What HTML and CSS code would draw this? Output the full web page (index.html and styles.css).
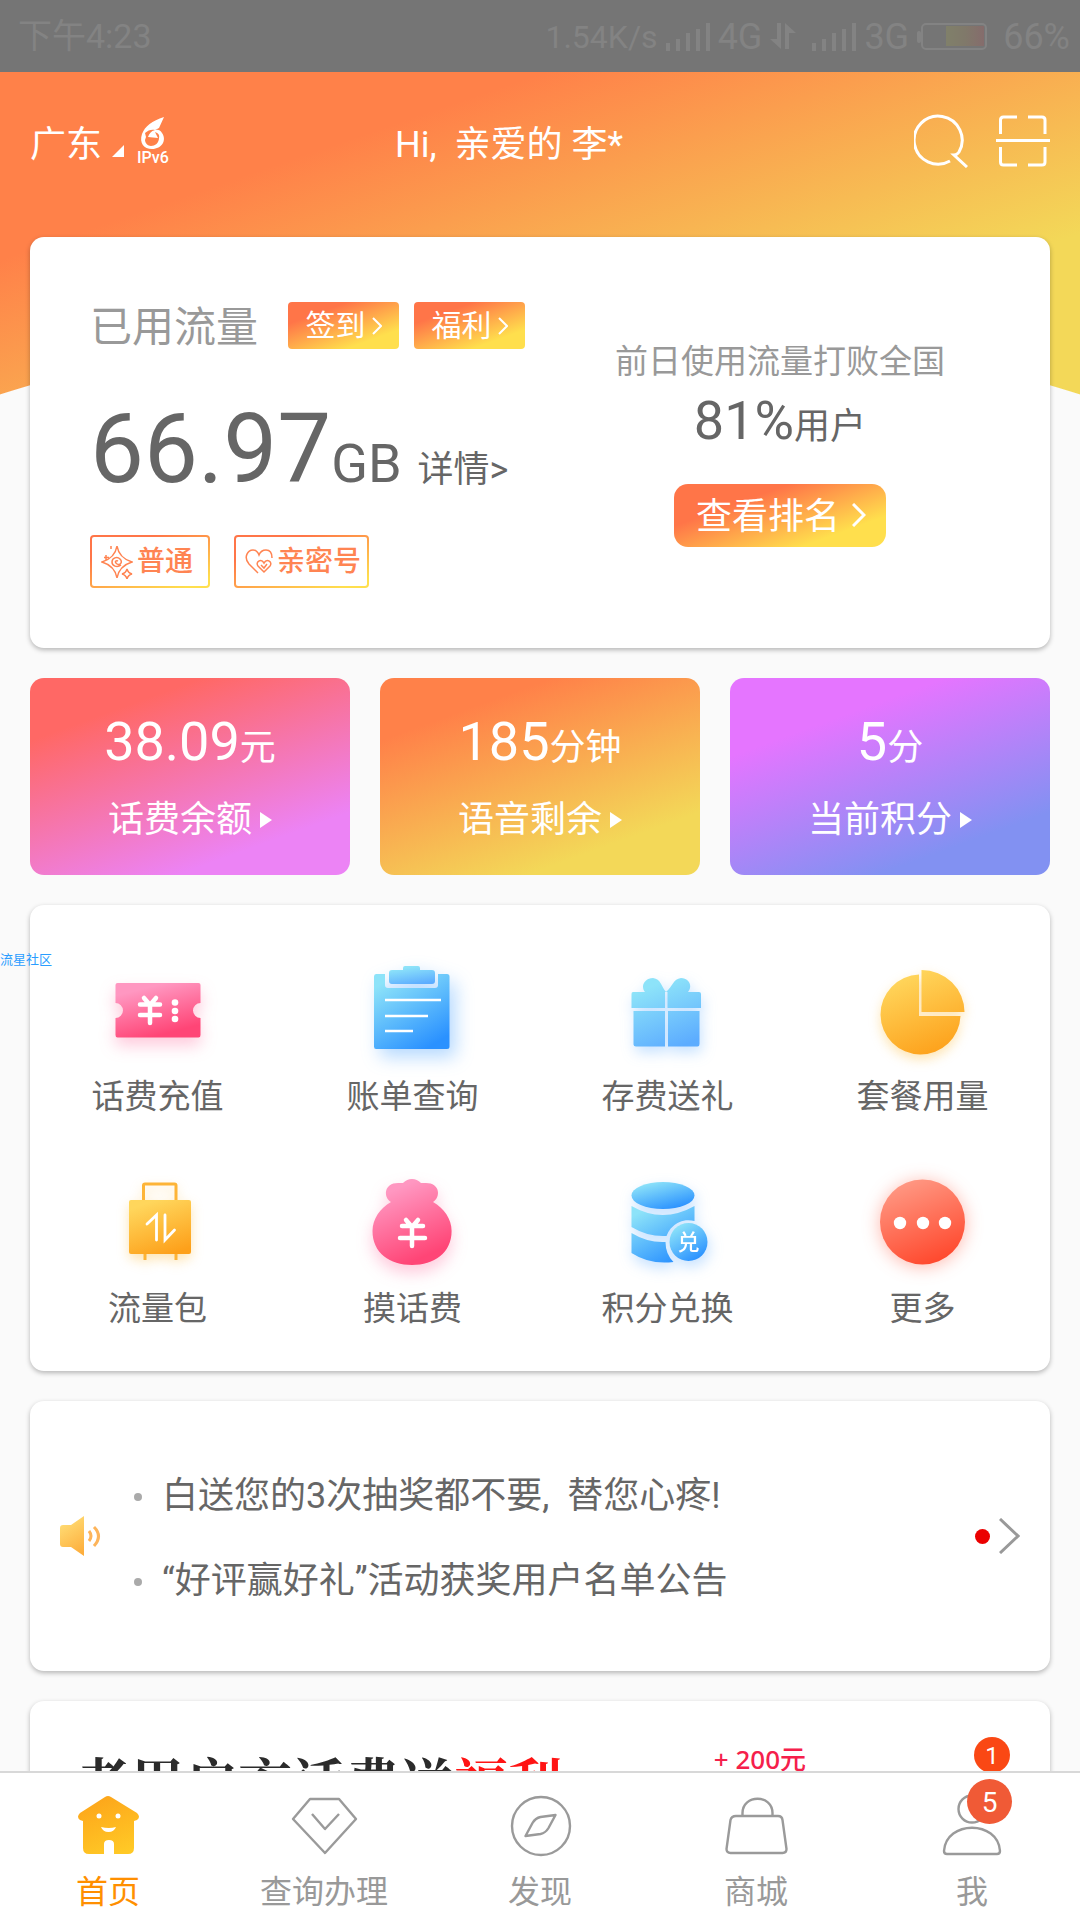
FILE: index.html
```html
<!DOCTYPE html>
<html lang="zh-CN">
<head>
  <meta charset="UTF-8">
  <meta name="viewport" content="width=device-width, initial-scale=1">
  <title>首页</title>
  <link rel="stylesheet" href="styles.css">
</head>
<body>
<div class="app">
  <div class="status">
    <span class="status-time">下午4:23</span>
    <div class="status-right">
      <span class="speed">1.54K/s</span>
      <svg width="44" height="30" viewBox="0 0 44 30" fill="#838383"><path d="M0 21h4v8h-4zM10 17h4v12h-4zM20 11h4v18h-4zM30 7h4v22h-4zM40 1h4v28h-4z"/></svg>
      <span>4G</span>
      <svg width="26" height="30" viewBox="0 0 26 30" fill="#838383"><path d="M7 1h4v26L0 17h7zM15 27V1l11 10h-7v16z"/></svg>
      <svg class="sig2" width="44" height="30" viewBox="0 0 44 30" fill="#838383"><path d="M0 21h4v8h-4zM10 17h4v12h-4zM20 11h4v18h-4zM30 7h4v22h-4zM40 1h4v28h-4z"/></svg>
      <span>3G</span>
      <svg width="70" height="30" viewBox="0 0 70 30">
        <defs><linearGradient id="bat"><stop offset="0" stop-color="#80806a"/><stop offset=".5" stop-color="#80796a"/><stop offset="1" stop-color="#856c6c"/></linearGradient></defs>
        <rect x="0" y="9" width="4" height="12" rx="2" fill="#838383"/>
        <rect x="5" y="2" width="64" height="25" rx="4" fill="none" stroke="#838383" stroke-width="2"/>
        <rect x="29" y="4" width="38" height="20" fill="url(#bat)"/>
      </svg>
      <span class="percent">66%</span>
    </div>
  </div>

  <main class="main">
    <div class="content">
      <header class="header">
        <button class="city">广东
          <svg width="12" height="12" viewBox="0 0 12 12"><path d="M12 0v12H0z" fill="#fff"/></svg>
          <svg class="ipv6" width="34" height="48" viewBox="0 0 34 48" fill="#fff">
            <path fill-rule="evenodd" d="M27 0C15 4 8 9 5 17c-3 9 2 15 10 15 10 0 15-9 10-16-2-4-6-4-9-2l6-3zM9 20l-1-4c3-3 7-4 10-3-4 1-6 4-7 7l10 1-3-6c3 1 5 3 4 6 0 5-4 8-8 8-3 0-6-3-6-6z"/>
            <text x="0" y="46" font-size="16" font-weight="500">IPv6</text>
          </svg>
        </button>
        <h1>Hi,&nbsp; 亲爱的 李*</h1>
        <div class="header-tools">
          <button aria-label="搜索">
            <svg width="54" height="54" viewBox="0 0 54 54" fill="none" stroke="#fff" stroke-width="3"><path d="M36 47A24 24 0 1 1 45 38Q43 41 40 41L53 53"/></svg>
          </button>
          <button aria-label="扫一扫">
            <svg width="54" height="54" viewBox="0 0 54 54" fill="none" stroke="#fff" stroke-width="3"><path d="M4.500 20V6q0-3 3-3H21M32 3h14q3 0 3 3v14M4.500 33v15q0 3 3 3H21M32 51h14q3 0 3-3V33M0 26.500h54"/></svg>
          </button>
        </div>
      </header>

      <section class="card usage">
        <div class="usage-left">
          <div class="usage-title">
            <span>已用流量</span>
            <button class="mini">签到<svg width="10" height="18" viewBox="0 0 10 18"><path d="M1 1l8 8-8 8"/></svg></button>
            <button class="mini">福利<svg width="10" height="18" viewBox="0 0 10 18"><path d="M1 1l8 8-8 8"/></svg></button>
          </div>
          <div class="usage-num"><b>66.97</b><i>GB</i><a href="#">详情&gt;</a></div>
          <div class="tags">
            <button class="tag">
              <svg width="32" height="34" viewBox="0 0 32 34"><path d="M16 1q2 12 15 16-13 4-15 16Q14 21 1 17 14 13 16 1zM20 20c-4 3-9 1-9-3s5-6 8-3 0 7-3 5-1-4 1-3M26 24q1 4 5 5-4 1-5 5-1-4-5-5 4-1 5-5zM5 10v5M3 12.500h5M10 1v3"/></svg>普通
            </button>
            <button class="tag">
              <svg width="28" height="26" viewBox="0 0 28 26"><path d="M13 24L4 15C-2 8 3 1 8 1q4 0 6 5 2-5 7-5 6 0 6 8M19 23l-6-6c-3-4 3-8 6-3 3-5 9-1 6 3zM16 16l3 3 3-4"/></svg>亲密号
            </button>
          </div>
        </div>
        <div class="usage-right">
          <p class="rank-text">前日使用流量打败全国</p>
          <p class="rank-num"><b>81%</b>用户</p>
          <button class="rank-btn">查看排名<svg width="14" height="24" viewBox="0 0 14 24"><path d="M1 1l11 11L1 23"/></svg></button>
        </div>
      </section>

      <section class="tiles">
        <a href="#" class="tile pink"><span class="tile-num"><b>38.09</b>元</span><span class="tile-label">话费余额</span></a>
        <a href="#" class="tile orange"><span class="tile-num"><b>185</b>分钟</span><span class="tile-label">语音剩余</span></a>
        <a href="#" class="tile purple"><span class="tile-num"><b>5</b>分</span><span class="tile-label">当前积分</span></a>
      </section>

      <svg class="defs" width="0" height="0">
        <defs>
          <linearGradient id="gPink" x1=".3" y1="0" x2=".7" y2="1"><stop offset=".1" stop-color="#ff97c1"/><stop offset=".9" stop-color="#ff4576"/></linearGradient>
          <linearGradient id="gBlue" x1=".2" y1="0" x2=".8" y2="1"><stop offset=".05" stop-color="#8de3f9"/><stop offset=".95" stop-color="#2a91ff"/></linearGradient>
          <linearGradient id="gSky" x1=".3" y1="0" x2=".7" y2="1"><stop offset=".1" stop-color="#8de3f9"/><stop offset="1" stop-color="#5cacff"/></linearGradient>
          <linearGradient id="gGold" x1=".3" y1="0" x2=".7" y2="1"><stop offset=".05" stop-color="#ffd65c"/><stop offset="1" stop-color="#fda01a"/></linearGradient>
          <linearGradient id="gRed" x1=".3" y1="0" x2=".7" y2="1"><stop offset=".05" stop-color="#ff9580"/><stop offset=".95" stop-color="#ff4a2f"/></linearGradient>
          <linearGradient id="gHome" x1=".3" y1="0" x2=".7" y2="1"><stop offset="0" stop-color="#fda51a"/><stop offset="1" stop-color="#ffc926"/></linearGradient>
        </defs>
      </svg>

      <section class="card menu">
        <a href="#" class="menu-item">
          <svg class="sh-pink" viewBox="0 0 120 120">
            <path d="M19.500 32h81q2 0 2 2v18a7 7 0 0 0 0 15v17q0 2.500-2 2.500h-81q-2 0-2-2.500V67a7 7 0 0 0 0-15V34q0-2 2-2z" fill="url(#gPink)"/>
            <path d="M46 47l6 7 6-7M42 53.500h20M42 64h20M52 54v18" fill="none" stroke="#fff" stroke-width="4.500" stroke-linecap="round"/>
            <g fill="#fff"><circle cx="77" cy="51.500" r="3.300"/><circle cx="77" cy="60" r="3.300"/><circle cx="77" cy="68" r="3.300"/></g>
          </svg>话费充值
        </a>
        <a href="#" class="menu-item">
          <svg class="sh-blue" viewBox="0 0 120 120">
            <path d="M23 23h9v11q0 3 3 3h47q3 0 3-3V23h9q2.500 0 2.500 2.500v70q0 2.500-2.500 2.500H23q-2 0-2-2.500v-70Q21 23 23 23z" fill="url(#gBlue)"/>
            <path d="M39 19h11v-2q0-2 2-2h13q2 0 2 2v2h12q3 0 3 3v8q0 3-3 3H39q-3 0-3-3v-8q0-3 3-3z" fill="url(#gSky)"/>
            <path d="M32 49h56M32 65h43M32 80h28" stroke="#fff" stroke-width="2.500"/>
          </svg>账单查询
        </a>
        <a href="#" class="menu-item">
          <svg class="sh-sky" viewBox="0 0 120 120" fill="url(#gSky)">
            <path d="M37 41c-5-6 0-14 8-14 8 1 8 8 13 14zM80 41c5-6 1-14-7-14-8 1-8 8-15 14zM25 41h32v16H23.500V43q0-2 1.500-2zM59.500 41H91q2 0 2 2v14H59.500zM25.500 60H57v35.500H28q-2.500 0-2.500-2zM60 60h31.500v33q0 2.500-2 2.500H60z"/>
          </svg>存费送礼
        </a>
        <a href="#" class="menu-item">
          <svg class="sh-gold" viewBox="0 0 120 120" fill="url(#gGold)"><path d="M56 23.500V65h41.500A40 40 0 1 1 56 23.500zM58.500 19A43 42 0 0 1 101.500 61h-43z"/></svg>套餐用量
        </a>
        <a href="#" class="menu-item">
          <svg class="sh-gold" viewBox="0 0 120 120">
            <path d="M45.500 38V22.500q0-1.500 1.500-1.500h29.500q1.500 0 1.500 1.500V38M47 90v7M78 90v7" fill="none" stroke="#fdb437" stroke-width="3"/>
            <rect x="31" y="37" width="62" height="54" rx="2" fill="url(#gGold)"/>
            <path d="M49 61l9.500-9v25M67 52v25l9.500-10" fill="none" stroke="#fff" stroke-width="2.800" stroke-linecap="round"/>
          </svg>流量包
        </a>
        <a href="#" class="menu-item">
          <svg class="sh-pink" viewBox="0 0 120 120">
            <path d="M38 39c-8-5-7-19 7-19h5q4-4 9-4t9 4h5c14 0 15 14 7 19 11 6 18.600 17 18.600 29C98.600 90 81 102 59 102S19.500 90 19.500 68c0-12 7.500-23 18.500-29z" fill="url(#gPink)"/>
            <path d="M53 57l6 7 6-7M49 63h21M47 75h25M59 64v19" fill="none" stroke="#fff" stroke-width="4.500" stroke-linecap="round"/>
          </svg>摸话费
        </a>
        <a href="#" class="menu-item">
          <svg class="sh-sky" viewBox="0 0 120 120">
            <path d="M23.500 43q31 18 63 0v15a23 23 0 0 0-28 15Q40 74 23.500 64zM23.500 70Q40 80 57.500 79q0 12 8 20Q42 102 23.500 90z" fill="url(#gBlue)"/>
            <ellipse cx="55" cy="32.500" rx="31.500" ry="13.500" fill="url(#gBlue)"/>
            <circle cx="80.500" cy="79" r="19" fill="url(#gBlue)"/>
            <text x="80.500" y="87" font-size="22" font-weight="500" text-anchor="middle" fill="#fff">兑</text>
          </svg>积分兑换
        </a>
        <a href="#" class="menu-item">
          <svg class="sh-red" viewBox="0 0 120 120"><circle cx="59.500" cy="59" r="42.500" fill="url(#gRed)"/><g fill="#fff"><circle cx="37" cy="60" r="6.200"/><circle cx="60" cy="60" r="6.200"/><circle cx="82" cy="60" r="6.200"/></g></svg>更多
        </a>
      </section>

      <section class="card notice">
        <svg width="42" height="42" viewBox="0 0 42 42">
          <path d="M3 10h8L24 1v40L11 32H3q-3 0-3-3V13q0-3 3-3z" fill="url(#gGold)" opacity=".85"/>
          <path d="M29 16q4 5 0 10M34 12q9 9 0 19" fill="none" stroke="#fdb45a" stroke-width="3"/>
        </svg>
        <ul>
          <li>白送您的3次抽奖都不要,&nbsp; 替您心疼!</li>
          <li>“好评赢好礼”活动获奖用户名单公告</li>
        </ul>
        <span class="dot"></span>
        <svg width="21" height="36" viewBox="0 0 21 36"><path d="M1 1l18 17L1 35" fill="none" stroke="#999" stroke-width="3"/></svg>
      </section>

      <section class="card banner">
        <h2>老用户充话费送<em>福利</em></h2>
        <span class="bonus">+ 200元</span>
        <span class="count">1</span>
      </section>
    </div>
  </main>

  <nav class="tabbar">
    <a href="#" class="tab active">
      <svg viewBox="0 0 64 64">
        <path d="M29 4q3-2 6 0l26 16q4 4 0 7l-3 1v27q0 6-6 6H38V51q0-4-5-4t-5 4v10H13q-6 0-6-6V28l-3-1q-4-3 0-7z" fill="url(#gHome)"/>
        <circle cx="23" cy="23" r="2.500" fill="#fff"/><circle cx="42" cy="23" r="2.500" fill="#fff"/>
        <path d="M25 34q8 2 15 0-2 5-7.500 5T25 34z" fill="#fff"/>
      </svg>首页
    </a>
    <a href="#" class="tab"><svg viewBox="0 0 64 64"><path d="M18 6h29l17 20-31 34L1 26zM20 21l13 15 14-15"/></svg>查询办理</a>
    <a href="#" class="tab"><svg viewBox="0 0 64 64"><circle cx="33" cy="33" r="29"/><path d="M17.500 43l7-13q3-5 8-6l15-2-7 13q-3 5-8 6z"/></svg>发现</a>
    <a href="#" class="tab"><svg viewBox="0 0 64 64"><path d="M12 23h42q4 0 4.500 4l4 29q0 4-4 4h-52q-4 0-4-4l4-29q1-4 5.500-4zM18.500 23v-3c0-19 30-19 30 0v3"/></svg>商城</a>
    <a href="#" class="tab"><svg viewBox="0 0 64 64"><circle cx="32" cy="16" r="13.500"/><path d="M7 61q-3 0-3-3C6 27 58 27 60 58q0 3-3 3z"/></svg>我<span class="badge">5</span></a>
  </nav>
  <span class="mark">流星社区</span>
</div>
</body>
</html>
```
FILE: styles.css
```css
:root { --bg:#fafafa; --text:#666; --muted:#999; --line:#d8d8d8; }
*{box-sizing:border-box;margin:0;padding:0;}
body{font-family:Roboto,"Noto Sans CJK SC",sans-serif;font-size:36px;background:var(--bg);color:var(--text);}
button{border:none;background:none;font:inherit;color:inherit;cursor:pointer;}
a{color:inherit;text-decoration:none;}
b,i,em,h1{font-weight:400;font-style:normal;}
svg{display:block;flex:none;}
.app{display:flex;flex-direction:column;height:100vh;overflow:hidden;}

/* 状态栏 */
.status{display:flex;justify-content:space-between;align-items:center;height:72px;padding:2px 10px 0 18px;background:#757575;color:#838383;flex:none;}
.status-time{font-size:34px;line-height:40px;padding-bottom:2px;}
.status-right{display:flex;align-items:center;gap:8px;}
.status-right .speed{font-size:32px;}
.sig2{margin-left:8px;}
.status-right .percent{margin-left:8px;}

/* 滚动区 */
.main{flex:1;min-height:0;overflow-y:auto;scrollbar-width:none;}
.content{padding:0 30px 30px;background:
  radial-gradient(1800px at 50% 2039px,var(--bg) 1799px,transparent 1800px) no-repeat 0 0/100% 350px,
  linear-gradient(161deg,#ff8149 26%,#f3d858 74%) no-repeat 0 0/100% 350px;}
.header{display:grid;grid-template-columns:1fr auto 1fr;align-items:center;height:165px;padding-bottom:28px;color:#fff;}
.header h1{font-size:36px;padding-right:62px;}
.city{display:flex;align-items:center;gap:10px;}
.city svg:first-of-type{align-self:flex-end;margin-bottom:10px;}
.ipv6{margin-left:3px;overflow:visible;}
.header-tools{display:flex;justify-content:flex-end;gap:28px;}

.card{background:#fff;border-radius:14px;box-shadow:0 2px 5px rgba(0,0,0,.28);margin-bottom:30px;}

/* 流量 */
.usage{display:flex;justify-content:space-between;padding:56px 105px 60px 60px;}
.usage-title{display:flex;align-items:center;font-size:42px;line-height:60px;color:var(--muted);}
.usage-title span{margin-right:30px;padding-top:5px;}
.mini{display:flex;align-items:center;justify-content:center;gap:6px;width:111px;height:47px;margin-right:15px;border-radius:4px;background:linear-gradient(160deg,#ff7548 25%,#ffdf4d 78%);color:#fff;font-size:30px;line-height:47px;}
.mini svg,.rank-btn svg{fill:none;stroke:#fff;stroke-width:2;}
.usage-num{display:flex;align-items:baseline;margin-top:31px;line-height:120px;}
.usage-num b{font-size:96px;}
.usage-num i{font-size:54px;}
.usage-num a{margin-left:16px;}
.tags{display:flex;gap:24px;margin-top:5px;}
.tag{display:flex;align-items:center;gap:4px;height:53px;padding:0 6px 0 9px;border:2px solid transparent;border-radius:4px;background:linear-gradient(#fff,#fff) padding-box,linear-gradient(160deg,#ff7548 25%,#ffdf4d 90%) border-box;color:#ff8452;font-size:28px;font-weight:500;line-height:48px;}
.tag:first-child{padding-right:15px;}
.tag svg{fill:none;stroke:#ff8452;stroke-width:1.5;}
.usage-right{display:flex;flex-direction:column;align-items:center;padding-top:45px;}
.rank-text{font-size:33px;line-height:48px;color:var(--muted);}
.rank-num{line-height:70px;}
.rank-num b{font-size:54px;}
.rank-btn{display:flex;align-items:center;gap:12px;height:63px;margin-top:22px;padding:4px 20px 0 22px;border-radius:14px;background:linear-gradient(160deg,#ff7548 30%,#ffdf4d 78%);color:#fff;line-height:59px;}
.rank-btn svg{margin-bottom:6px;stroke-width:3;}

/* 余额 */
.tiles{display:grid;grid-template-columns:repeat(3,1fr);gap:30px;margin-bottom:30px;}
.tile{display:flex;flex-direction:column;align-items:center;height:197px;padding-top:29px;border-radius:14px;color:#fff;}
.tile-num{line-height:70px;}
.tile-num b{font-size:54px;}
.tile-label{display:flex;align-items:center;gap:8px;margin-top:10px;line-height:54px;}
.tile-label::after{content:"";border-left:12px solid #fff;border-top:8px solid transparent;border-bottom:8px solid transparent;}
.pink{background:linear-gradient(160deg,#ff6865 20%,#ec83f5 80%);}
.orange{background:linear-gradient(160deg,#ff8149 20%,#f3d858 80%);}
.purple{background:linear-gradient(160deg,#e575ff 25%,#8291f2 80%);}

/* 功能菜单 */
.defs{position:absolute;}
.menu{display:grid;grid-template-columns:repeat(4,1fr);row-gap:44px;padding:46px 0 40px;}
.menu-item{display:flex;flex-direction:column;align-items:center;font-size:33px;line-height:44px;}
.menu-item svg{width:120px;height:120px;margin-bottom:4px;}
.sh-pink{filter:drop-shadow(0 8px 8px rgba(255,80,140,.3));}
.sh-blue{filter:drop-shadow(6px 8px 9px rgba(42,145,255,.35));}
.sh-sky{filter:drop-shadow(2px 6px 7px rgba(70,160,255,.3));}
.sh-gold{filter:drop-shadow(0 5px 6px rgba(253,180,40,.35));}
.sh-red{filter:drop-shadow(0 2px 9px rgba(255,74,47,.4));}

/* 公告 */
.notice{display:flex;align-items:center;padding:47px 30px;}
.notice ul{flex:1;margin-left:32px;padding-top:6px;list-style:none;}
.notice li{display:flex;align-items:center;line-height:85px;}
.notice li::before{content:"";width:8px;height:8px;margin-right:20px;border-radius:50%;background:#aaa;}
.dot{width:15px;height:15px;margin-right:9px;border-radius:50%;background:#eb0000;}

.banner{display:flex;align-items:flex-start;height:300px;padding:36px 40px 0 46px;}
.banner h2{flex:1;font:700 54px/80px "Noto Serif CJK SC","Noto Sans CJK SC",serif;margin-top:4px;color:#2b2b2b;}
.banner em{font-weight:700;color:#ff1414;}
.bonus{margin-right:168px;font-family:"Noto Sans","Noto Sans CJK SC",sans-serif;font-size:26px;font-weight:500;line-height:44px;color:#f5204b;}
.count{width:36px;height:36px;border-radius:50%;background:#fa4814;color:#fff;font-size:24px;line-height:38px;text-align:center;}

/* 底部导航 */
.tabbar{display:flex;flex:none;height:149px;padding-top:20px;border-top:2px solid var(--line);background:#fff;color:var(--muted);}
.tab{position:relative;flex:1;display:flex;flex-direction:column;align-items:center;font-size:32px;line-height:40px;}
.tab svg{width:64px;height:64px;margin-bottom:15px;overflow:visible;fill:none;stroke:#9a9a9a;stroke-width:2.4;stroke-linejoin:round;}
.tab.active{color:#ff8f00;}
.tab.active svg{stroke:none;}
.badge{position:absolute;top:-14px;left:50%;margin-left:-5px;width:45px;height:45px;border-radius:50%;background:#f05a36;color:#fff;font-size:28px;line-height:47px;text-align:center;}

.mark{position:absolute;left:0;top:950px;font-size:13px;line-height:20px;color:#2a9dff;}
```
